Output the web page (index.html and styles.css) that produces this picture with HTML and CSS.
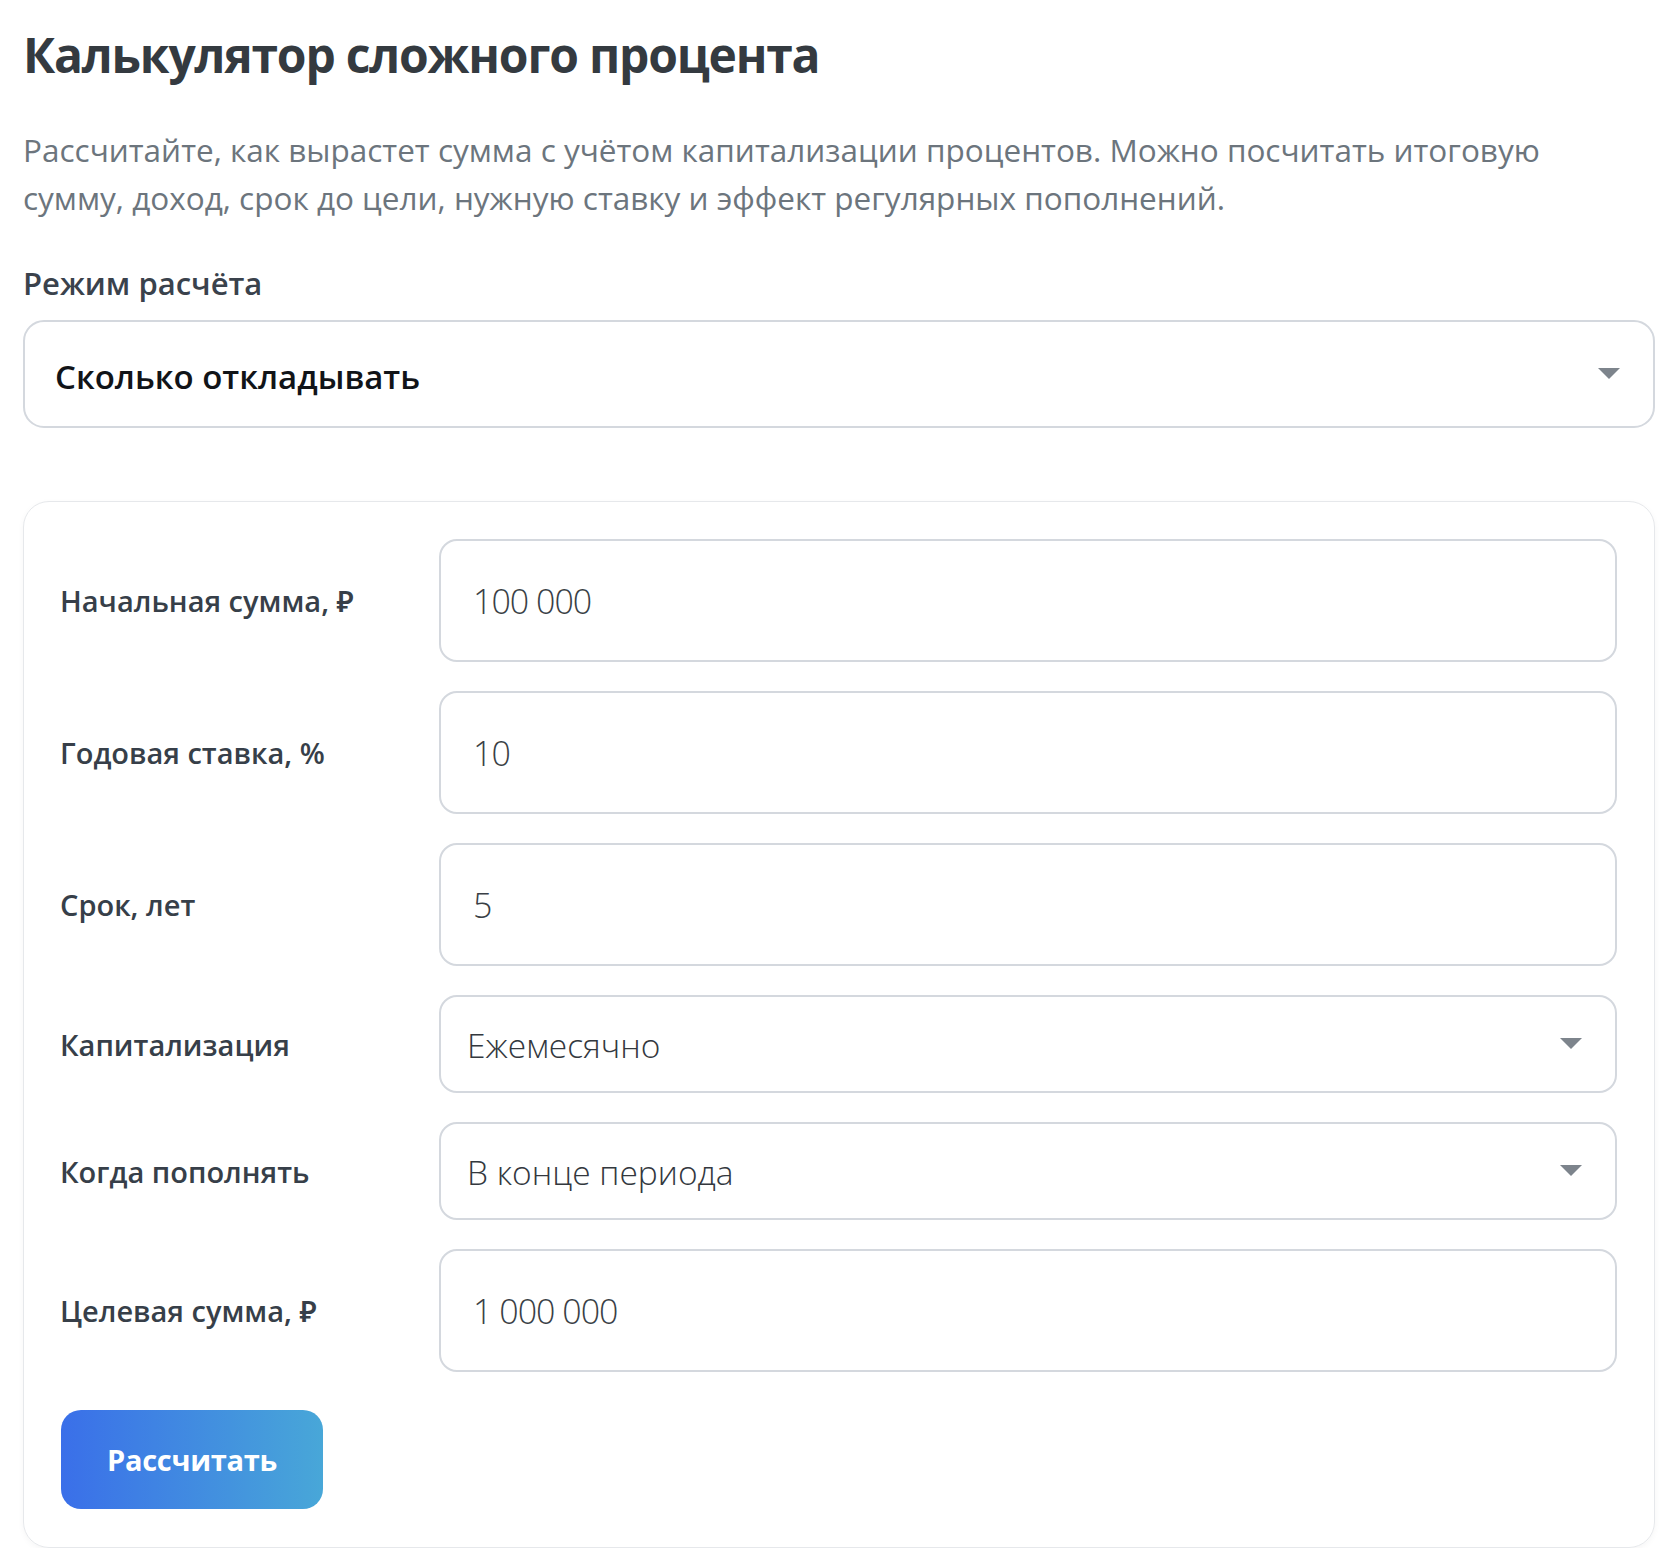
FILE: index.html
```html
<!DOCTYPE html>
<html lang="ru">
<head>
<meta charset="utf-8">
<title>Калькулятор сложного процента</title>
<link rel="stylesheet" href="styles.css">
</head>
<body>
<main class="page">
  <h1 class="title">Калькулятор сложного процента</h1>
  <p class="lead">Рассчитайте, как вырастет сумма с учётом капитализации процентов. Можно посчитать итоговую сумму, доход, срок до цели, нужную ставку и эффект регулярных пополнений.</p>

  <label class="mode-label" for="mode">Режим расчёта</label>
  <div class="select-wrap mode-wrap">
    <select id="mode" class="mode-select">
      <option>Сколько откладывать</option>
    </select>
    <span class="caret"></span>
  </div>

  <section class="card">
    <form class="form">
      <label class="field-label" for="f1">Начальная сумма, ₽</label>
      <input id="f1" class="field-input" type="text" value="100 000">

      <label class="field-label" for="f2">Годовая ставка, %</label>
      <input id="f2" class="field-input" type="text" value="10">

      <label class="field-label" for="f3">Срок, лет</label>
      <input id="f3" class="field-input" type="text" value="5">

      <label class="field-label" for="f4">Капитализация</label>
      <div class="select-wrap">
        <select id="f4" class="field-select">
          <option>Ежемесячно</option>
        </select>
        <span class="caret"></span>
      </div>

      <label class="field-label" for="f5">Когда пополнять</label>
      <div class="select-wrap">
        <select id="f5" class="field-select">
          <option>В конце периода</option>
        </select>
        <span class="caret"></span>
      </div>

      <label class="field-label" for="f6">Целевая сумма, ₽</label>
      <input id="f6" class="field-input" type="text" value="1 000 000">

      <div class="actions">
        <button type="button" class="btn">Рассчитать</button>
      </div>
    </form>
  </section>
</main>
</body>
</html>
```

FILE: styles.css
```css
* { box-sizing: border-box; }

html, body {
  margin: 0;
  padding: 0;
  background: #ffffff;
}

body {
  font-family: "Open Sans", "Noto Sans", sans-serif;
  color: #343a40;
}

.page {
  width: 1632px;
  margin-left: 23px;
}

.title {
  margin: 25px 0 0;
  font-size: 48px;
  line-height: 60px;
  font-weight: 700;
  color: #343a40;
  letter-spacing: -1.2px;
}

.lead {
  margin: 41px 0 0;
  font-size: 31.5px;
  line-height: 48px;
  color: #6c757d;
  max-width: 1590px;
}

.mode-label {
  display: block;
  margin-top: 41px;
  font-size: 31px;
  line-height: 40px;
  font-weight: 600;
  color: #3a424c;
}

.select-wrap {
  position: relative;
}

.mode-wrap {
  margin-top: 17px;
}

.caret {
  position: absolute;
  right: 35px;
  top: 50%;
  margin-top: -6px;
  width: 0;
  height: 0;
  border-left: 11px solid transparent;
  border-right: 11px solid transparent;
  border-top: 11px solid #7d848c;
  pointer-events: none;
}

select {
  appearance: none;
  -webkit-appearance: none;
  display: block;
  width: 100%;
  background: #ffffff;
  border: 2px solid #d4d8de;
  font-family: inherit;
  margin: 0;
}

.mode-select {
  height: 108px;
  border-radius: 21px;
  padding: 4px 80px 0 30px;
  font-size: 33px;
  font-weight: 600;
  color: #111418;
}

.card {
  margin-top: 73px;
  border: 1px solid #e6e8eb;
  border-radius: 26px;
  padding: 37px 37px 38px;
  box-shadow: 0 2px 6px rgba(0, 0, 0, 0.04);
}

.form {
  display: grid;
  grid-template-columns: 350px 1fr;
  column-gap: 28px;
  row-gap: 29px;
  align-items: center;
}

.field-label {
  font-size: 29px;
  font-weight: 600;
  color: #373f49;
  margin-left: -1px;
}

.field-input {
  display: block;
  width: 100%;
  height: 123px;
  margin: 0;
  border: 2px solid #d4d8de;
  border-radius: 18px;
  padding: 0 30px 0 32px;
  font-family: inherit;
  font-size: 34px;
  font-weight: 300;
  letter-spacing: -1px;
  color: #3a3f46;
  background: #ffffff;
  outline: none;
}

.field-select {
  height: 98px;
  border-radius: 18px;
  padding: 2px 80px 0 26px;
  font-size: 33.5px;
  font-weight: 300;
  color: #33383e;
}

.actions {
  grid-column: 1 / -1;
  padding-top: 9px;
}

.btn {
  display: block;
  width: 262px;
  height: 99px;
  border: none;
  border-radius: 20px;
  background: linear-gradient(90deg, #3a6fe9 0%, #48a7d8 100%);
  color: #ffffff;
  font-family: inherit;
  font-size: 29px;
  font-weight: 700;
  letter-spacing: -0.3px;
  cursor: pointer;
}
```
